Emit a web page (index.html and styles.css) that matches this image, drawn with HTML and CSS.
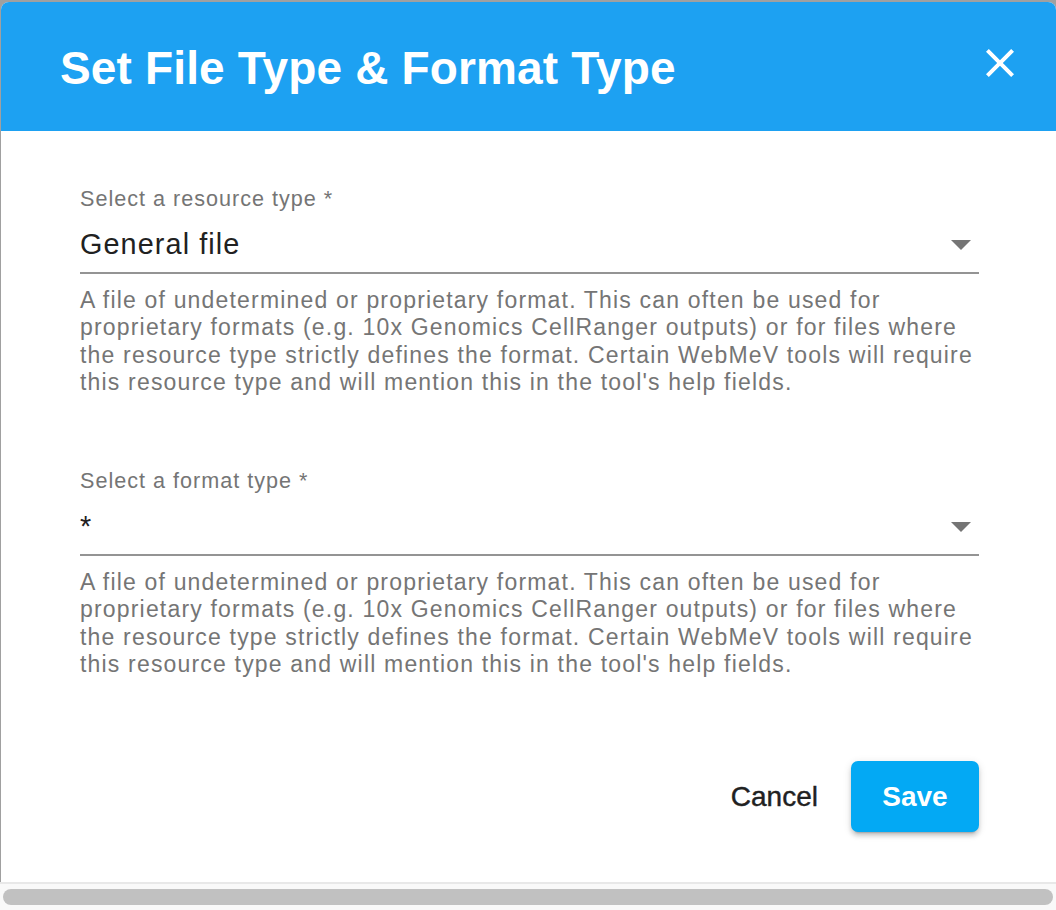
FILE: index.html
```html
<!DOCTYPE html>
<html lang="en">
<head>
<meta charset="utf-8">
<title>Set File Type &amp; Format Type</title>
<link rel="stylesheet" href="styles.css">
</head>
<body>
<div class="page">
  <div class="dialog">
    <header class="dlg-title">
      <h2 class="title-text">Set File Type &amp; Format Type</h2>
      <button class="close-btn" aria-label="close">
        <svg viewBox="5 5 14 14" width="28" height="28"><path d="M19 6.41L17.59 5 12 10.59 6.41 5 5 6.41 10.59 12 5 17.59 6.41 19 12 13.41 17.59 19 19 17.59 13.41 12z" fill="#ffffff"/></svg>
      </button>
    </header>
    <div class="dlg-content">
      <div class="field">
        <label class="field-label">Select a resource type *</label>
        <div class="select">
          <span class="select-value">General file</span>
          <svg class="arrow" viewBox="0 0 20 10" width="20" height="10"><polygon points="0,0 20,0 10,10" fill="#757575"/></svg>
        </div>
        <p class="helper">A file of undetermined or proprietary format. This can often be used for proprietary formats (e.g. 10x Genomics CellRanger outputs) or for files where the resource type strictly defines the format. Certain WebMeV tools will require this resource type and will mention this in the tool's help fields.</p>
      </div>
      <div class="field">
        <label class="field-label">Select a format type *</label>
        <div class="select">
          <span class="select-value">*</span>
          <svg class="arrow" viewBox="0 0 20 10" width="20" height="10"><polygon points="0,0 20,0 10,10" fill="#757575"/></svg>
        </div>
        <p class="helper">A file of undetermined or proprietary format. This can often be used for proprietary formats (e.g. 10x Genomics CellRanger outputs) or for files where the resource type strictly defines the format. Certain WebMeV tools will require this resource type and will mention this in the tool's help fields.</p>
      </div>
    </div>
    <div class="dlg-actions">
      <button class="btn-text">Cancel</button>
      <button class="btn-save">Save</button>
    </div>
  </div>
  <div class="hscroll"><div class="hscroll-thumb"></div></div>
</div>
</body>
</html>
```

FILE: styles.css
```css
html, body {
  margin: 0;
  padding: 0;
}
body {
  background: #a0a0a0;
  font-family: "Liberation Sans", Arial, sans-serif;
}
.page {
  height: 910px;
  display: flex;
  flex-direction: column;
  overflow: hidden;
}
.dialog {
  flex: 1;
  margin: 2px 0 0 1px;
  background: #ffffff;
  border-radius: 8px 8px 0 0;
  overflow: hidden;
  display: flex;
  flex-direction: column;
}
.dlg-title {
  height: 129px;
  flex: none;
  background: #1da1f2;
  display: flex;
  align-items: center;
  justify-content: space-between;
  padding: 0 42px 0 59px;
}
.title-text {
  margin: 0;
  color: #ffffff;
  font-size: 46px;
  font-weight: 700;
  line-height: 1;
  letter-spacing: 0.15px;
  padding-top: 2px;
}
.close-btn {
  background: none;
  border: 0;
  padding: 0;
  width: 28px;
  height: 28px;
  margin-bottom: 8px;
  display: flex;
}
.dlg-content {
  padding: 55px 77px 0 79px;
}
.field {
  display: flex;
  flex-direction: column;
  margin-bottom: 72px;
}
.field:last-child {
  margin-bottom: 0;
}
.field-label {
  color: #757575;
  font-size: 21.6px;
  line-height: 26px;
  letter-spacing: 1px;
}
.select {
  margin-top: 14px;
  height: 36px;
  padding-bottom: 10px;
  border-bottom: 2px solid #949494;
  display: flex;
  align-items: center;
  justify-content: space-between;
}
.select-value {
  color: #212121;
  font-size: 28.8px;
  line-height: 36px;
  letter-spacing: 1.1px;
}
.arrow {
  margin-right: 8px;
  margin-top: 2px;
}
.helper {
  margin: 13px 0 0;
  color: #757575;
  font-size: 23px;
  line-height: 27.3px;
  letter-spacing: 1.18px;
}
.dlg-actions {
  display: flex;
  justify-content: flex-end;
  align-items: center;
  padding: 83px 77px 0 0;
  gap: 19px;
}
.btn-text {
  background: none;
  border: 0;
  padding: 0 14px;
  height: 71px;
  color: #212121;
  font-family: "Liberation Sans", Arial, sans-serif;
  font-size: 28px;
  -webkit-text-stroke: 0.4px #212121;
}
.btn-save {
  background: #03a9f4;
  border: 0;
  border-radius: 7px;
  height: 71px;
  width: 128px;
  color: #ffffff;
  font-family: "Liberation Sans", Arial, sans-serif;
  font-size: 28px;
  font-weight: 700;
  box-shadow: 0 5px 2px -4px rgba(0,0,0,0.2), 0 4px 4px 0 rgba(0,0,0,0.14), 0 2px 9px 0 rgba(0,0,0,0.12);
}
.hscroll {
  box-sizing: border-box;
  height: 28px;
  flex: none;
  border-top: 2px solid #e8e8e8;
  background: #f9f9f9;
  padding: 5px 3px 0 3px;
}
.hscroll-thumb {
  height: 16px;
  border-radius: 8px;
  background: #c1c1c1;
}
```
